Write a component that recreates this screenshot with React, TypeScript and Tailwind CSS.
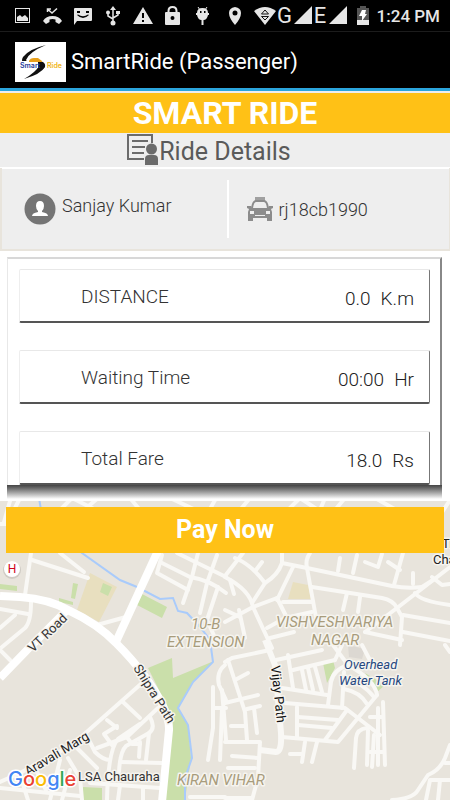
import React from 'react';

const fareRows = [
  { label: 'DISTANCE', value: '0.0', unit: 'K.m' },
  { label: 'Waiting Time', value: '00:00', unit: 'Hr' },
  { label: 'Total Fare', value: '18.0', unit: 'Rs' },
];

const mainRoads = [
  'M0 596L20 597Q50 599 70 611Q98 624 116 643Q133 660 143 674Q170 710 169 730L162 802',
  'M172 520L157 553L115 644',
];

const minorRoads = [
  // north west
  'M31 553L25 595', 'M32 560L88 578', 'M60 553L84 572', 'M97 625L126 617', 'M0 609L28 614',
  'M31 602Q31 622 25 628L2 647', 'M15 615L0 628', 'M0 650L10 660', 'M0 524H6', 'M4 522L10 501',
  'M14 510L20 498', 'M60 510L70 500M72 498L96 510M84 510L98 498M130 498L140 510',
  // 10-B extension
  'M162 555L157 573L188 590', 'M162 563L190 577Q210 580 226 593', 'M177 553L226 577', 'M198 553L192 577L183 603',
  'M217 555L207 583L200 613', 'M218 587L207 620L216 640', 'M200 527L215 500M240 510L250 498M170 498L200 512',
  // vishveshvariya nagar
  'M243 553L225 576', 'M235 558Q252 565 265 583', 'M262 562L256 570', 'M282 563Q278 575 265 583L252 603', 'M282 553V563',
  'M225 577Q250 590 253 607L272 648', 'M230 580L234 594', 'M282 563L307 568L392 586Q408 589 422 587',
  'M310 553Q305 560 307 568L317 623', 'M293 567L277 600', 'M312 587L382 598Q393 600 397 608L402 617L400 645',
  'M450 567L397 608L365 632', 'M277 598L253 607L225 622', 'M283 602H313', 'M277 598L287 618', 'M347 593L343 610',
  'M360 597L358 612', 'M340 558L338 571', 'M357 555L353 573', 'M365 562L378 567L382 554', 'M388 562L400 570',
  'M403 553L394 585', 'M413 573V584', 'M415 593Q420 601 450 605', 'M432 577L442 585L450 584', 'M422 587L433 580',
  'M403 615L450 623', 'M403 632L450 641', 'M267 628L285 618L312 612', 'M270 638L294 632', 'M225 610L240 617',
  'M239 610L245 638', 'M365 632L402 640', 'M288 510L300 498M320 510L325 498M335 510L345 498M375 498L400 512M300 498L318 510',
  // aravali marg and around
  'M142 683L72 745L20 773L0 782', 'M123 702L140 718', 'M107 720L117 728', 'M158 708L127 737L97 748',
  'M90 742L95 752Q103 760 110 760', 'M117 726L104 734L112 745', 'M150 717Q156 728 149 733L126 746Q120 752 119 772',
  'M140 724L118 739Q108 750 107 800', 'M120 762L162 763', 'M140 742L139 757', 'M126 736L132 744H140', 'M149 733L146 760',
  'M77 748L97 768', 'M68 758L80 778L82 800', 'M90 783L160 788', 'M0 788L80 796', 'M60 760L50 800', 'M36 770L46 790',
  'M20 775L28 800', 'M70 770L62 800', 'M120 785L118 800', 'M143 787V800',
  // between shipra path and vijay path
  'M213 687V728L208 760', 'M225 665Q216 672 219 685L226 700', 'M213 708H226', 'M222 708L220 760', 'M190 797H225',
  'M225 662L232 658L270 650', 'M228 660L245 712L247 740', 'M248 673L235 680', 'M225 703L258 695', 'M222 690L226 740',
  'M247 709L260 706', 'M254 708L257 733', 'M231 726H246', 'M225 742H260L258 778L252 800', 'M232 756L258 758',
  'M228 768H255', 'M225 798H252',
  // vijay path grid
  'M276 660L322 650', 'M288 655L293 688', 'M282 688L327 695', 'M293 670L335 660', 'M302 670L306 690', 'M308 668L313 690',
  'M315 667L322 692', 'M348 665Q333 670 331 682L328 705', 'M333 645L348 665Q375 680 377 695', 'M362 645L374 668',
  'M335 660L342 645', 'M344 672L342 708', 'M344 689Q360 692 367 704', 'M346 681Q360 680 374 697', 'M285 703L345 708L380 735',
  'M377 695L338 742L282 737', 'M297 707V737', 'M298 717L338 720', 'M298 725L332 728', 'M347 710L325 740',
  'M305 742L302 762', 'M317 742L312 762', 'M290 754H303', 'M383 702L385 765', 'M378 708V765', 'M370 717H383',
  'M367 728Q357 729 356 738L354 768', 'M368 730L367 765', 'M374 735L372 767', 'M370 752H384',
  // south east
  'M450 745L445 758Q440 770 428 775L418 790Q413 799 392 800', 'M445 763H450', 'M426 800L430 780H450', 'M440 780L438 800',
  'M445 645L450 652', 'M437 520L450 500',
];

function MapLabel({ x, y, angle = 0, size, fill, italic, children }: any) {
  return (
    <text
      x={x}
      y={y}
      transform={`rotate(${angle} ${x} ${y})`}
      fontSize={size}
      fill={fill}
      fontStyle={italic ? 'italic' : 'normal'}
      stroke="#f6f4ef"
      strokeWidth="3"
      strokeLinejoin="round"
      paintOrder="stroke"
    >
      {children}
    </text>
  );
}

function MapBackground() {
  return (
    <svg viewBox="0 0 450 800" preserveAspectRatio="xMidYMax slice" className="absolute inset-0 h-full w-full bg-[#e8e4dc]" aria-label="Map">
      <g fill="#cadfaa">
        <path d="M0 584L17 586V591L0 589Z" />
        <path d="M73 583L78 584L75 599L71 598Z" />
        <path d="M59 598L73 602V605L59 602Z" />
        <path d="M142 594L167 607L162 618L137 605Z" />
        <path d="M148 668L172 658L173 678L214 661L193 682L178 708L188 725L191 758L185 800H165L172 722L158 688Z" />
        <path d="M83 787L102 788V800H83Z" />
        <path d="M323 663L333 660L335 668L327 683Z" />
        <path d="M365 673L385 685L377 692Z" />
      </g>
      <g fill="#e8dfbf">
        <path d="M90 573L117 587L99 622L77 610Z" />
        <path d="M293 582L308 585L311 599H288Z" />
      </g>
      <path d="M103 583L112 587L108 596L100 592Z" fill="#cadfaa" />
      <path d="M348 645L365 649L362 659L349 657Z" fill="#dcd8d2" />
      <path
        d="M39 498L41 510L82 553L120 580L137 587L160 599L173 598L178 611L187 613L200 627L210 640L213 662L193 682L178 708L188 725L192 758L185 778V800"
        fill="none"
        stroke="#a9cbfb"
        strokeWidth="2"
      />
      <g fill="none" stroke="#f9f8f5" strokeWidth="4" strokeLinecap="round" strokeLinejoin="round">
        {minorRoads.map((d) => (
          <path key={d} d={d} />
        ))}
      </g>
      <g fill="none" stroke="#fff" strokeWidth="8" strokeLinejoin="round">
        {mainRoads.map((d) => (
          <path key={d} d={d} />
        ))}
        <path d="M66 611L30 647L0 678" />
        <path d="M265 640L275 665L281 733Q282 752 276 752L260 750" stroke="#f9f8f5" strokeWidth="6" />
      </g>
      <circle cx="12" cy="570" r="9" fill="#cfcbc4" />
      <circle cx="12" cy="569" r="8" fill="#fff" />
      <g fontFamily="Roboto, sans-serif">
        <text x="12" y="573" textAnchor="middle" fontSize="12" fill="#d0021b">H</text>
        <MapLabel x={191} y={629} size={15} fill="#a89c7c" italic>10-B</MapLabel>
        <MapLabel x={167} y={647} size={15} fill="#a89c7c" italic>EXTENSION</MapLabel>
        <MapLabel x={276} y={627} size={15} fill="#a89c7c" italic>VISHVESHVARIYA</MapLabel>
        <MapLabel x={311} y={645} size={15} fill="#a89c7c" italic>NAGAR</MapLabel>
        <MapLabel x={177} y={785} size={15} fill="#a89c7c" italic>KIRAN VIHAR</MapLabel>
        <MapLabel x={344} y={669} size={13} fill="#25477f" italic>Overhead</MapLabel>
        <MapLabel x={339} y={685} size={13} fill="#25477f" italic>Water Tank</MapLabel>
        <MapLabel x={33} y={653} angle={-44} size={13} fill="#333">VT Road</MapLabel>
        <MapLabel x={133} y={668} angle={58} size={13} fill="#333">Shipra Path</MapLabel>
        <MapLabel x={271} y={666} angle={84} size={13} fill="#111">Vijay Path</MapLabel>
        <MapLabel x={28} y={776} angle={-31} size={13} fill="#222">Aravali Marg</MapLabel>
        <MapLabel x={78} y={781} size={13} fill="#333">LSA Chauraha</MapLabel>
        <MapLabel x={442} y={548} size={13} fill="#222">Tr</MapLabel>
        <MapLabel x={433} y={564} size={13} fill="#222">Cha</MapLabel>
      </g>
      <text x="8" y="786" fontFamily="Inter, sans-serif" fontSize="20" fontWeight="500" stroke="#fff" strokeWidth="3" paintOrder="stroke">
        <tspan fill="#4285f4">G</tspan>
        <tspan fill="#ea4335">o</tspan>
        <tspan fill="#fbbc05">o</tspan>
        <tspan fill="#4285f4">g</tspan>
        <tspan fill="#34a853">l</tspan>
        <tspan fill="#ea4335">e</tspan>
      </text>
    </svg>
  );
}

// 30x32 status bar slot
function StatusIcon({ children }: { children: React.ReactNode }) {
  return (
    <svg viewBox="0 0 30 32" width="30" height="32" fill="#e6e6e6" aria-hidden="true">
      {children}
    </svg>
  );
}

function Signal() {
  return (
    <svg viewBox="0 0 18 32" width="18" height="32" fill="#e6e6e6" aria-hidden="true">
      <path d="M0 24L18 6V24Z" />
    </svg>
  );
}

function StatusBar() {
  return (
    <div className="flex h-8 items-center border-b border-[#1c1c1c] bg-black pl-2 pr-[10px]">
      <StatusIcon>
        <path fillRule="evenodd" d="M7 8H22V23H7ZM8 9V22H21V9Z" />
        <path d="M9 21V17L12 15L14 17L17 15L20 18V21Z" />
      </StatusIcon>
      <StatusIcon>
        <path d="M5 21Q8 16 14.500 16T24 21L21 24L17.500 22V19.500Q14.500 18.500 11.500 19.500V22L8 24Z" />
        <path d="M9.500 12V9H13M10 9.500L14 13L19 8.500" fill="none" stroke="#e6e6e6" strokeWidth="1.500" />
      </StatusIcon>
      <StatusIcon>
        <path fillRule="evenodd" d="M7 8H23Q24 8 24 9V20Q24 21 23 21H9L6 25V9Q6 8 7 8ZM9 11V13H12V11ZM18 11V13H21V11ZM9 15Q15 21 21 15L20 14.500Q15 18 10 14.500Z" />
      </StatusIcon>
      <StatusIcon>
        <g fill="none" stroke="#e6e6e6" strokeWidth="1.500">
          <path d="M15 9V23M10 13V16L15 19M20 13V15L15 18" />
        </g>
        <path d="M15 6L18 10H12ZM18 11H22V14H18Z" />
        <circle cx="10" cy="12.500" r="2" />
        <circle cx="15" cy="23" r="2.500" />
      </StatusIcon>
      <StatusIcon>
        <path fillRule="evenodd" d="M15 7L25 24H5ZM14 13V18H16V13ZM14 20V22H16V20Z" />
      </StatusIcon>
      <StatusIcon>
        <path d="M10.500 13V11Q10.500 7 14.500 7T18.500 11V13" fill="none" stroke="#e6e6e6" strokeWidth="2" />
        <path fillRule="evenodd" d="M8 12H21Q22 12 22 13V24Q22 25 21 25H8Q7 25 7 24V13Q7 12 8 12ZM14.500 16A2 2 0 1 0 14.500 20A2 2 0 1 0 14.500 16Z" />
      </StatusIcon>
      <StatusIcon>
        <path d="M10 7L12 10M19 7L17 10" stroke="#e6e6e6" />
        <path fillRule="evenodd" d="M9 13Q9 8 14.500 8T20 13H21V15H20Q19 20 15.500 20V25H13.500V20Q10 20 9 15H8V13ZM12 11V13H13.500V11ZM16 11V13H17.500V11Z" />
      </StatusIcon>
      <StatusIcon>
        <path fillRule="evenodd" d="M17 7Q23 8 23 13Q23 18 17 25Q11 18 11 13Q11 8 17 7ZM17 10.500A2.500 2.500 0 1 0 17 15.500A2.500 2.500 0 1 0 17 10.500Z" />
      </StatusIcon>
      <div className="ml-auto flex items-center text-[#e6e6e6]">
        <svg viewBox="0 0 22 32" width="22" height="32" fill="#e6e6e6" aria-hidden="true">
          <path d="M0 11Q11 3 22 11L11 25Z" />
          <path d="M7.500 14L11 10L14.500 14ZM7.500 16.500H14.500L11 20Z" fill="#e6e6e6" stroke="#111" />
        </svg>
        <span className="w-[18px] text-center text-[22px] leading-8">G</span>
        <Signal />
        <span className="w-[17px] text-center text-[22px] leading-8">E</span>
        <Signal />
        <svg viewBox="0 0 12 32" width="12" height="32" className="ml-[10px]" aria-hidden="true">
          <path d="M3 6H9V8H12V25H0V8H3Z" fill="#555" />
          <path d="M0 20H12V25H0Z" fill="#e6e6e6" />
          <path d="M5 10H9L8 14H10L5 21V16H2Z" fill="#fff" />
        </svg>
        <span className="ml-2 text-[17px] leading-8 font-medium">1:24 PM</span>
      </div>
    </div>
  );
}

function Logo() {
  return (
    <svg viewBox="0 0 51 40" width="51" height="40" className="bg-white" role="img" aria-label="SmartRide logo">
      <path d="M31 3Q14 10 11 18Q11 20 26 20Q31 21 30 25Q26 32 9 37Q21 30 24 24Q24 22 10 22Q5 20 8 15Q14 7 31 3Z" fill="#111" />
      <path d="M6 19H25V26H6Z" fill="#fff" />
      <path d="M23 19L28 20Q31 22 29 26L23 29Z" fill="#111" />
      <path d="M14 19Q15 16 19 16H23L27 19V20H14Z" fill="#e9a11b" />
      <text x="5" y="26" fontFamily="Inter, sans-serif" fontSize="7" fontWeight="600" fill="#1f3c9c">Smart</text>
      <text x="32" y="26" fontFamily="Inter, sans-serif" fontSize="7" fontWeight="600" fill="#f0b414">Ride</text>
    </svg>
  );
}

function DetailsIcon() {
  return (
    <svg viewBox="0 0 32 32" width="32" height="32" fill="#6b6b6b" aria-hidden="true">
      <path d="M17 25H1V1H25V9M5 7H21M5 13H18M5 19H17" fill="none" stroke="#6b6b6b" strokeWidth="2" />
      <circle cx="24.500" cy="15" r="5.500" />
      <path d="M18 31V25Q18 21 22 21H27Q31 21 31 25V31Z" />
    </svg>
  );
}

function UserIcon() {
  return (
    <svg viewBox="0 0 32 32" width="32" height="32" aria-hidden="true">
      <circle cx="16" cy="16" r="15.500" fill="#757575" />
      <path d="M16 8Q20 8 20 13Q20 16 18 18V19Q24 20 24 23H8Q8 20 14 19V18Q12 16 12 13Q12 8 16 8Z" fill="#fff" />
    </svg>
  );
}

function TaxiIcon() {
  return (
    <svg viewBox="0 0 26 26" width="26" height="26" fill="#8c8c8c" aria-hidden="true">
      <path d="M8 1H18V5H8Z" fill="#a0a0a0" />
      <path d="M5 12Q6 5 9 5H17Q20 5 21 12" fill="none" stroke="#8c8c8c" strokeWidth="2" />
      <path fillRule="evenodd" d="M0 10H4L5 12H21L22 10H26V12L24 13L25 16V25H20V22H6V25H1V16L2 13L0 12ZM3 15V18H7V15ZM19 15V18H23V15ZM8 19V20H18V19Z" />
    </svg>
  );
}

export default function App() {
  return (
    <div className="relative min-h-screen overflow-hidden font-['Roboto',sans-serif]">
      <MapBackground />
      <div className="relative">
        <StatusBar />
        <header className="flex h-14 items-center gap-[5px] bg-black px-[15px] pt-[3px] text-white">
          <Logo />
          <span className="text-[22px]">SmartRide (Passenger)</span>
        </header>
        <div className="border-t-3 border-b-2 border-t-[#2ba5dc] border-b-[#eee]" />
        <h1 className="bg-[#ffc116] text-center text-[32px] leading-10 font-bold text-white">SMART RIDE</h1>
        <div className="flex h-[35px] items-center justify-center border-b border-white bg-[#eee] pr-8">
          <DetailsIcon />
          <h2 className="pt-1 text-[25px] leading-8 text-[#5a5a5a]">Ride Details</h2>
        </div>

        <div className="mr-px ml-[2px] flex h-[81px] items-center border-t border-white bg-[#eee] text-lg font-light text-[#333]">
          <div className="flex flex-1 items-center gap-[6px] pl-[22px]">
            <UserIcon />
            <span className="pb-[6px]">Sanjay Kumar</span>
          </div>
          <div className="h-[58px] w-[2px] bg-white" />
          <div className="flex flex-1 items-center gap-[6px] pl-[18px]">
            <TaxiIcon />
            <span className="pt-[2px]">rj18cb1990</span>
          </div>
        </div>

        <div className="mt-[2px] bg-white pt-[6px] pr-2 pb-[2px] pl-[7px]">
          <dl className="flex flex-col gap-[27px] border-t-2 border-r-2 border-l border-t-[#d8d8d8] border-r-[#888] border-l-[#e8e8e8] pt-[10px] pr-[10px] pl-[11px]">
            {fareRows.map((row) => (
              <div
                key={row.label}
                className="flex h-[54px] items-center justify-between rounded-[2px] border border-t-[#e8e8e8] border-r-[#777] border-b-2 border-b-[#555] border-l-[#eee] pr-[15px] pl-[61px] font-light"
              >
                <dt className="pt-1 text-[19px] text-[#333]">{row.label}</dt>
                <dd className="flex gap-[10px] pt-2 text-[19px] text-[#222]">
                  <span>{row.value}</span>
                  <span>{row.unit}</span>
                </dd>
              </div>
            ))}
          </dl>
          <div className="h-[14px] bg-linear-to-b from-[#444] to-white" />
        </div>

        <div className="px-[6px] pt-[6px]">
          <button type="button" className="h-[46px] w-full bg-[#ffc116] text-[25px] font-bold text-white">
            Pay Now
          </button>
        </div>
      </div>
    </div>
  );
}
